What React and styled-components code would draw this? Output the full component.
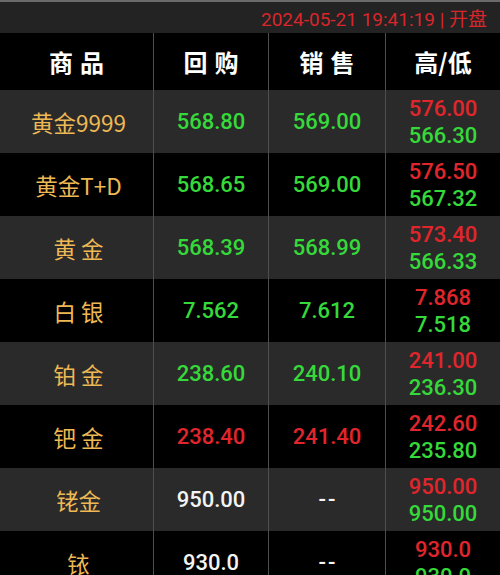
import React from "react";
import styled, { createGlobalStyle } from "styled-components";

const Global = createGlobalStyle`
  html, body { margin: 0; padding: 0; background: #000; }
  body { font-family: Roboto, "Noto Sans CJK SC", sans-serif; overflow: hidden; }
`;

const Page = styled.div`
  width: 500px;
  height: 575px;
  overflow: hidden;
  background: #000;
`;

const TopBar = styled.div`
  height: 33px;
  box-sizing: border-box;
  border-top: 2px solid #6a6a6a;
  background: #232323;
  display: flex;
  align-items: center;
  justify-content: flex-end;
  padding-right: 13px;
  color: #d8262b;
  font-family: Roboto, "Noto Sans CJK SC", sans-serif;
  font-size: 19px;
`;

const Grid = styled.div`
  display: grid;
  grid-template-columns: 153px 115px 117px 115px;
`;

const Cell = styled.div`
  height: ${(p) => (p.$head ? "57px" : "63px")};
  background: ${(p) => (p.$alt ? "#2a2a2a" : "#000")};
  border-left: ${(p) => (p.$first ? "none" : "1px solid #4e4e4e")};
  box-sizing: border-box;
  display: flex;
  flex-direction: column;
  align-items: center;
  justify-content: center;
  overflow: visible;
`;

const HeadText = styled.span`
  color: #fff;
  font-family: "Noto Sans CJK SC", sans-serif;
  font-weight: 700;
  font-size: 24px;
  letter-spacing: ${(p) => (p.$spaced ? "7px" : "0")};
  margin-right: ${(p) => (p.$spaced ? "-7px" : "0")};
`;

const Name = styled.span`
  color: #eeb954;
  font-family: "Noto Sans CJK SC", sans-serif;
  font-size: 22.5px;
  white-space: pre;
  margin-left: 4px;
`;

const colors = { g: "#36d93a", r: "#e0262c", w: "#f4f4f4" };

const Num = styled.span`
  color: ${(p) => colors[p.$c]};
  font-family: Roboto, sans-serif;
  font-weight: 500;
  font-size: 22px;
  line-height: 27px;
  letter-spacing: ${(p) => (p.$dash ? "2px" : "0")};
  margin-right: ${(p) => (p.$dash ? "-2px" : "0")};
`;

const rows = [
  ["黄金9999", "568.80", "g", "569.00", "g", "576.00", "566.30"],
  ["黄金T+D", "568.65", "g", "569.00", "g", "576.50", "567.32"],
  ["黄 金", "568.39", "g", "568.99", "g", "573.40", "566.33"],
  ["白 银", "7.562", "g", "7.612", "g", "7.868", "7.518"],
  ["铂 金", "238.60", "g", "240.10", "g", "241.00", "236.30"],
  ["钯 金", "238.40", "r", "241.40", "r", "242.60", "235.80"],
  ["铑金", "950.00", "w", "--", "w", "950.00", "950.00"],
  ["铱", "930.0", "w", "--", "w", "930.0", "930.0"],
];

export default function App() {
  return (
    <Page>
      <Global />
      <TopBar>2024-05-21 19:41:19 | 开盘</TopBar>
      <Grid>
        <Cell $head $first><HeadText $spaced>商品</HeadText></Cell>
        <Cell $head><HeadText $spaced>回购</HeadText></Cell>
        <Cell $head><HeadText $spaced>销售</HeadText></Cell>
        <Cell $head><HeadText>高/低</HeadText></Cell>
        {rows.map((r, i) => {
          const alt = i % 2 === 0;
          return (
            <React.Fragment key={i}>
              <Cell $alt={alt} $first><Name>{r[0]}</Name></Cell>
              <Cell $alt={alt}><Num $c={r[2]} $dash={r[1] === "--"}>{r[1]}</Num></Cell>
              <Cell $alt={alt}><Num $c={r[4]} $dash={r[3] === "--"}>{r[3]}</Num></Cell>
              <Cell $alt={alt}>
                <Num $c="r">{r[5]}</Num>
                <Num $c="g">{r[6]}</Num>
              </Cell>
            </React.Fragment>
          );
        })}
      </Grid>
    </Page>
  );
}
